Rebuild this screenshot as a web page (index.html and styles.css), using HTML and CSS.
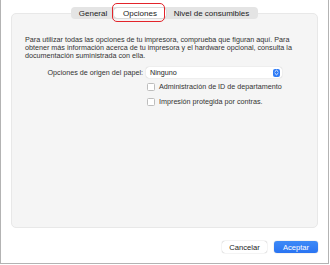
FILE: index.html
```html
<!DOCTYPE html>
<html lang="es">
<head>
<meta charset="UTF-8" />
<title>Opciones de impresora</title>
<link rel="stylesheet" href="styles.css">
</head>
<body>
<div class="window">
  <div class="tabs">
    <span class="tab">General</span>
    <span class="tab tab-active">Opciones</span>
    <span class="tab">Nivel de consumibles</span>
    <span class="highlight"></span>
  </div>

  <div class="panel">
    <p class="intro">Para utilizar todas las opciones de tu impresora, comprueba que figuran aquí. Para obtener más información acerca de tu impresora y el hardware opcional, consulta la documentación suministrada con ella.</p>

    <div class="row">
      <span class="label">Opciones de origen del papel:</span>
      <div class="popup">
        <span>Ninguno</span>
        <span class="stepper">
          <svg width="5" height="7" viewBox="0 0 5 7"><path d="M1 2.6 L2.5 1.2 L4 2.6 M1 4.4 L2.5 5.8 L4 4.4" fill="none" stroke="#fff" stroke-width="0.9" stroke-linecap="round" stroke-linejoin="round"/></svg>
        </span>
      </div>
    </div>

    <label class="check"><span class="box"></span>Administración de ID de departamento</label>
    <label class="check"><span class="box"></span>Impresión protegida por contras.</label>
  </div>

  <div class="footer">
    <button class="btn" type="button">Cancelar</button>
    <button class="btn btn-primary" type="button">Aceptar</button>
  </div>
</div>
</body>
</html>
```

FILE: styles.css
```css
/* ventana */
body {
  margin: 0;
  background: #fff;
  font-family: "Liberation Sans", Arial, sans-serif;
  color: #262626;
}
.window {
  box-sizing: border-box;
  width: 329px;
  height: 264px;
  border: 1px solid #b3b3b3;
  border-top: none;
  padding: 7px 10px 0;
  display: flex;
  flex-direction: column;
}

/* pestañas */
.tabs {
  align-self: center;
  position: relative;
  z-index: 1;
  display: flex;
  height: 12px;
  margin-bottom: -6px;
  padding: 0 1px;
  background: #e4e4e4;
  border-radius: 4px;
  font-size: 8px;
  color: #222;
}
.tab {
  display: flex;
  align-items: center;
  justify-content: center;
  padding: 0 5px;
}
.tab:nth-child(1) { width: 32px; }
.tab:nth-child(2) { width: 42px; }
.tab:nth-child(3) { width: 81px; }
.tab-active {
  margin: 1px 0;
  background: #fff;
  border-radius: 3px;
  box-shadow: 0 0 1px rgba(0, 0, 0, 0.35);
  color: #1a1a1a;
}
.highlight {
  position: absolute;
  left: 41px;
  top: -4px;
  width: 51px;
  height: 17px;
  border: 1.5px solid #e3242b;
  border-radius: 5px;
}

/* panel */
.panel {
  box-sizing: border-box;
  height: 215px;
  padding: 22px 23px 0 13px;
  background: #f5f5f5;
  border: 1px solid #e8e8e8;
  border-radius: 5px;
  font-size: 7.2px;
}
.intro {
  margin: 0;
  line-height: 8px;
  color: #333;
}
.row {
  display: flex;
  align-items: center;
  margin-top: 7px;
}
.label {
  flex: none;
  width: 118px;
  text-align: right;
  color: #333;
}
.popup {
  flex: none;
  box-sizing: border-box;
  display: flex;
  align-items: center;
  justify-content: space-between;
  width: 136px;
  height: 11px;
  margin-left: 3px;
  padding: 0 2px 0 4px;
  background: #fff;
  border-radius: 3px;
  box-shadow: 0 0 1px rgba(0, 0, 0, 0.3);
}
.stepper {
  display: flex;
  align-items: center;
  justify-content: center;
  width: 7px;
  height: 8px;
  background: #2f7cf6;
  border-radius: 2px;
}
.check {
  display: flex;
  align-items: center;
  margin: 4px 0 0 122px;
  color: #333;
}
.check + .check {
  margin-top: 6px;
}
.box {
  width: 6px;
  height: 6px;
  margin-right: 4px;
  background: #fff;
  border: 0.5px solid #bdbdbd;
  border-radius: 1.5px;
}

/* botones */
.footer {
  display: flex;
  justify-content: flex-end;
  gap: 7px;
  margin-top: 13px;
}
.btn {
  height: 12px;
  padding: 0;
  width: 45px;
  font-family: inherit;
  font-size: 7.6px;
  color: #222;
  background: #fff;
  border: none;
  border-radius: 3px;
  box-shadow: 0 0 1px rgba(0, 0, 0, 0.45);
}
.btn-primary {
  width: 44px;
  color: #fff;
  background: linear-gradient(#3d8af7, #2a74f2);
}
```
